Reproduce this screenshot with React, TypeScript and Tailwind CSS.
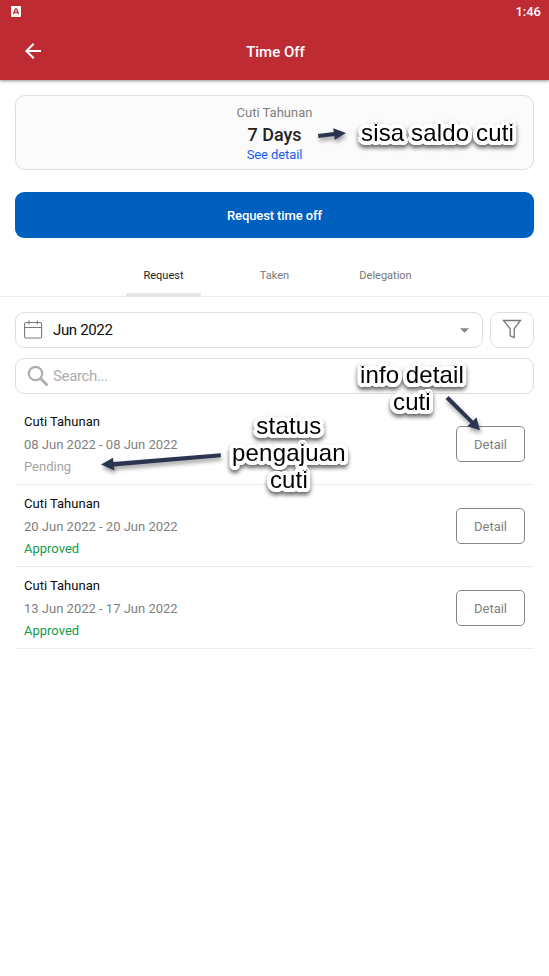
import React from "react";

type Leave = { name: string; range: string; status: "Pending" | "Approved" };

const leaves: Leave[] = [
  { name: "Cuti Tahunan", range: "08 Jun 2022 - 08 Jun 2022", status: "Pending" },
  { name: "Cuti Tahunan", range: "20 Jun 2022 - 20 Jun 2022", status: "Approved" },
  { name: "Cuti Tahunan", range: "13 Jun 2022 - 17 Jun 2022", status: "Approved" },
];

function LeaveRow({ leave }: { leave: Leave }) {
  const tone = leave.status === "Pending" ? "text-[#a3a3a3]" : "text-[#119a48]";
  return (
    <li className="flex h-[82px] items-center justify-between border-b border-[#ececec] pl-[9px] pr-[9px] pt-px">
      <div className="flex flex-col pt-[2px] text-[13px] leading-[22.5px]">
        <span className="text-[#0c0c0c]">{leave.name}</span>
        <span className="text-[#808080]">{leave.range}</span>
        <span className={tone}>{leave.status}</span>
      </div>
      <button className="h-9 w-[69px] rounded-[5px] border border-[#858585] bg-white pt-px text-[13px] text-[#808080]">
        Detail
      </button>
    </li>
  );
}

function Note({ className, lines }: { className: string; lines: string[] }) {
  return (
    <div
      className={
        "absolute flex flex-col items-center whitespace-nowrap font-['Liberation_Sans',Arial,sans-serif] text-[24px] leading-[27px] text-black [text-shadow:4px_0_0_white,3.7px_1.5px_0_white,2.8px_2.8px_0_white,1.5px_3.7px_0_white,0_4px_0_white,-1.5px_3.7px_0_white,-2.8px_2.8px_0_white,-3.7px_1.5px_0_white,-4px_0_0_white,-3.7px_-1.5px_0_white,-2.8px_-2.8px_0_white,-1.5px_-3.7px_0_white,0_-4px_0_white,1.5px_-3.7px_0_white,2.8px_-2.8px_0_white,3.7px_-1.5px_0_white,2px_0_0_white,-2px_0_0_white,0_2px_0_white,0_-2px_0_white] [filter:drop-shadow(0.5px_3px_2px_rgba(0,0,0,0.6))] " +
        className
      }
    >
      {lines.map((line) => (
        <span key={line}>{line}</span>
      ))}
    </div>
  );
}

export default function App() {
  return (
    <div className="relative h-[976px] w-[549px] overflow-hidden bg-white font-[Roboto,sans-serif]">
      <header className="h-[80px] bg-[#bf2b33] text-white shadow-[0_1px_3px_rgba(0,0,0,0.45)]">
        <div className="flex h-[22px] items-center justify-between pl-[11px] pr-[8px]">
          <svg width="10" height="11" viewBox="0 0 10 11">
            <rect width="10" height="11" rx="1" fill="#fff" />
            <path d="M2.4 8.2 4.5 2.8h1L7.6 8.2M3.3 6.4h3.4" fill="none" stroke="#bf2b33" strokeWidth="1.3" />
          </svg>
          <span className="pt-px text-[13px] font-medium">1:46</span>
        </div>
        <div className="grid h-[58px] grid-cols-[60px_1fr_58px] items-center">
          <svg className="ml-[23px]" width="20" height="20" viewBox="2 2 20 20" fill="#fff">
            <path d="M20 11H7.83l5.59-5.59L12 4l-8 8 8 8 1.41-1.41L7.83 13H20v-2z" />
          </svg>
          <h1 className="pt-[2px] text-center text-[15px] font-medium">Time Off</h1>
        </div>
      </header>

      <section className="mx-[15px] mt-[15px] flex h-[75px] flex-col items-center rounded-[10px] border border-[#dedede] bg-[#fbfbfb] pt-[6px]">
        <p className="text-[13px] leading-[22px] text-[#808080]">Cuti Tahunan</p>
        <p className="text-[18px] font-medium leading-[21px] text-[#242424]">7 Days</p>
        <p className="text-[13px] leading-[20px] tracking-[-0.1px] text-[#1a5cf0]">See detail</p>
      </section>

      <button className="mx-[15px] mt-[22px] block h-[46px] w-[519px] rounded-[9px] bg-[#0060c0] pt-[2px] text-[13px] font-medium tracking-[-0.1px] text-white">
        Request time off
      </button>

      <nav className="mt-[16px] flex h-[43px] justify-center border-b border-[#ececec] text-[11px] text-[#777]">
        <div className="flex h-[43px] w-[111px] justify-center">
          <span className="w-[75px] border-b-4 border-[#e6e6e6] text-center leading-[43px] text-[#222]">Request</span>
        </div>
        <div className="w-[111px] text-center leading-[43px]">Taken</div>
        <div className="w-[111px] text-center leading-[43px]">Delegation</div>
      </nav>

      <div className="mx-[15px] mt-[15px] flex gap-[7px]">
        <div className="flex h-9 w-[468px] items-center rounded-[9px] border border-[#dedede] pl-[8px] pr-[13px]">
          <svg width="19" height="20" viewBox="0 0 19 20" fill="none" stroke="#7a7a7a" strokeWidth="1.1">
            <rect x=".6" y="2.5" width="17" height="15.5" rx="1.5" />
            <path d="M.6 7.5h17M5 .5v4M13.3 .5v4" />
          </svg>
          <span className="ml-[10px] flex-1 pt-px text-[15px] tracking-[-0.35px] text-[#0c0c0c]">Jun 2022</span>
          <svg width="9" height="5" viewBox="0 0 10 5" fill="#858585">
            <path d="M0 0h10L5 5z" />
          </svg>
        </div>
        <div className="flex h-9 w-11 items-center justify-center rounded-[9px] border border-[#dedede]">
          <svg className="-mt-[2px]" width="20" height="20" viewBox="0 0 20 20" fill="none" stroke="#777" strokeWidth="1.3">
            <path d="M1.5 1.5h17l-6.3 8.3v8.7l-4-1.7V9.8z" />
          </svg>
        </div>
      </div>

      <div className="mx-[15px] mt-[10px] flex h-9 items-center rounded-[9px] border border-[#dedede] pl-[11px]">
        <svg className="-mt-px" width="22" height="22" viewBox="0 0 22 22" fill="none" stroke="#adadad" strokeWidth="2.2">
          <circle cx="8.5" cy="8.5" r="6.7" />
          <path d="m13.3 13.3 7.2 7.2" strokeWidth="2.8" />
        </svg>
        <span className="ml-[4px] text-[15px] tracking-[-0.35px] text-[#adadad]">Search...</span>
      </div>

      <ul className="mx-[15px] mt-[9px]">
        {leaves.map((leave) => (
          <LeaveRow key={leave.range} leave={leave} />
        ))}
      </ul>

      <Note className="left-[361px] top-[119px] tracking-[0.15px]" lines={["sisa saldo cuti"]} />
      <Note className="left-[360px] top-[361px] tracking-[0.1px]" lines={["info detail", "cuti"]} />
      <Note className="left-[232px] top-[412px] tracking-[0.2px]" lines={["status", "pengajuan", "cuti"]} />

      <svg
        className="pointer-events-none absolute left-0 top-0 [filter:drop-shadow(1px_3px_2px_rgba(0,0,0,0.4))]"
        width="549"
        height="976"
        viewBox="0 0 549 976"
        fill="#2b3550"
      >
        <path d="M318 134 333.8 132 333.2 128.2 346 133 334.8 139.8 334.4 136 318.4 138z" />
        <path d="M220.8 453.2v4L114 466.6l.4 4L101 464.6l12-6.8.4 4.2z" />
        <path d="m448.6 396 24.6 24.8 3.2-3.6 3.6 13-12.6-4 3-3L445.6 399z" />
      </svg>
    </div>
  );
}
